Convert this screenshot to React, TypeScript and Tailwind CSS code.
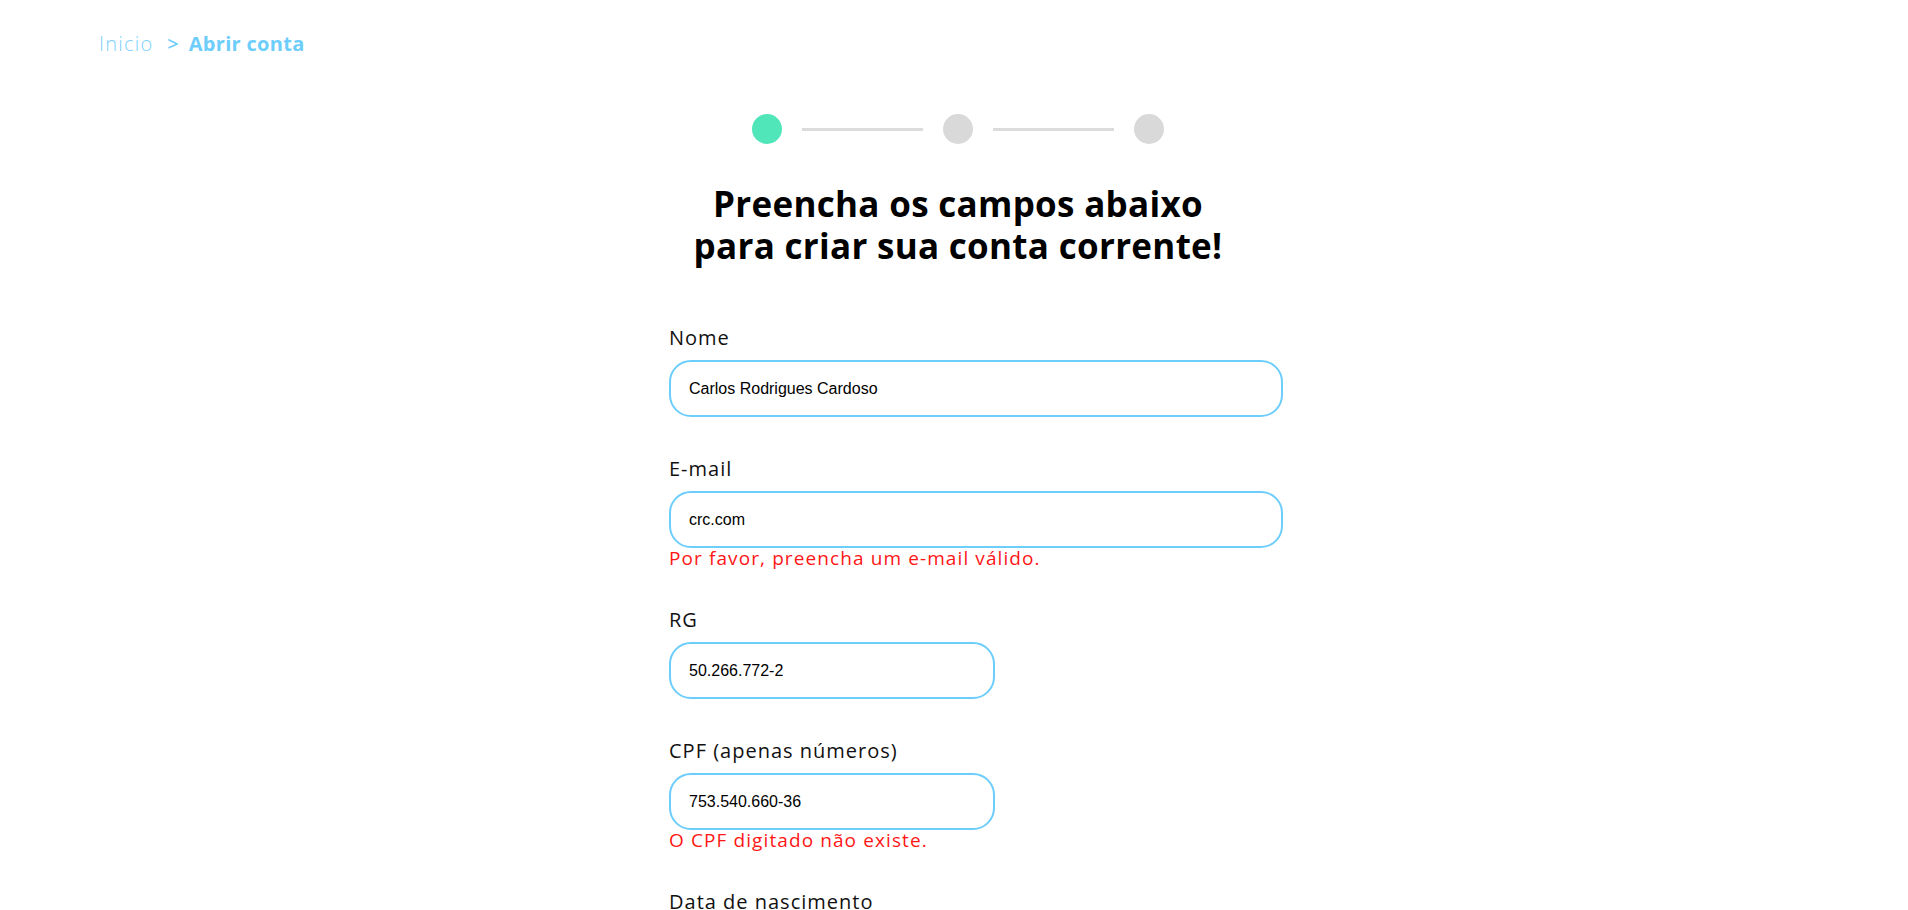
import React from "react";

const sans = { fontFamily: "'Open Sans', 'DejaVu Sans', sans-serif" };

function Field({
  label,
  value,
  error,
  wide = true,
}: {
  label: string;
  value: string;
  error?: string;
  wide?: boolean;
}) {
  return (
    <div className="mb-[41px] flex flex-col">
      <label className="h-[22px] text-[20px] font-medium leading-[22px] text-[#111] tracking-[1px]">
        {label}
      </label>
      <input
        readOnly
        value={value}
        className={`mt-[11px] h-[57px] rounded-[22px] border-2 border-[#6dcdfb] bg-white pl-[18px] text-[16px] text-black outline-none ${
          wide ? "w-[614px]" : "w-[326px]"
        }`}
        style={{ fontFamily: "'Liberation Sans', Arial, sans-serif" }}
      />
      {error && (
        <span className="text-[19px] leading-[20px] text-[#ff1616] tracking-[1.1px]">{error}</span>
      )}
    </div>
  );
}

export default function App() {
  return (
    <div className="min-h-screen bg-white" style={sans}>
      <nav className="flex items-center pl-[99px] pt-[31px] text-[20px] leading-[26px]">
        <span className="font-light tracking-[1.2px] text-[#7fd1fc]">Inicio</span>
        <span className="ml-[14px] font-semibold text-[#6dcdfb]">&gt;</span>
        <span className="ml-[10px] font-bold tracking-[0.3px] text-[#6dcdfb]">Abrir conta</span>
      </nav>

      <div className="mx-auto w-[570px]">
        <div className="mt-[57px] flex items-center justify-center pl-[8px]">
          <span className="h-[30px] w-[30px] rounded-full bg-[#50e6b9]" />
          <span className="mx-[20px] h-[3px] w-[121px] bg-[#dcdcdc]" />
          <span className="h-[30px] w-[30px] rounded-full bg-[#d9d9d9]" />
          <span className="mx-[20px] h-[3px] w-[121px] bg-[#dcdcdc]" />
          <span className="h-[30px] w-[30px] rounded-full bg-[#d9d9d9]" />
        </div>

        <h1 className="ml-[4px] mt-[39px] w-[570px] text-center text-[35px] font-bold leading-[42px] tracking-[0.3px] text-black">
          Preencha os campos abaixo
          <br />
          para criar sua conta corrente!
        </h1>

        <form className="mt-[60px] flex flex-col">
          <Field label="Nome" value="Carlos Rodrigues Cardoso" />
          <Field label="E-mail" value="crc.com" error="Por favor, preencha um e-mail válido." />
          <Field label="RG" value="50.266.772-2" wide={false} />
          <Field
            label="CPF (apenas números)"
            value="753.540.660-36"
            error="O CPF digitado não existe."
            wide={false}
          />
          <Field label="Data de nascimento" value="" wide={false} />
        </form>
      </div>
    </div>
  );
}
